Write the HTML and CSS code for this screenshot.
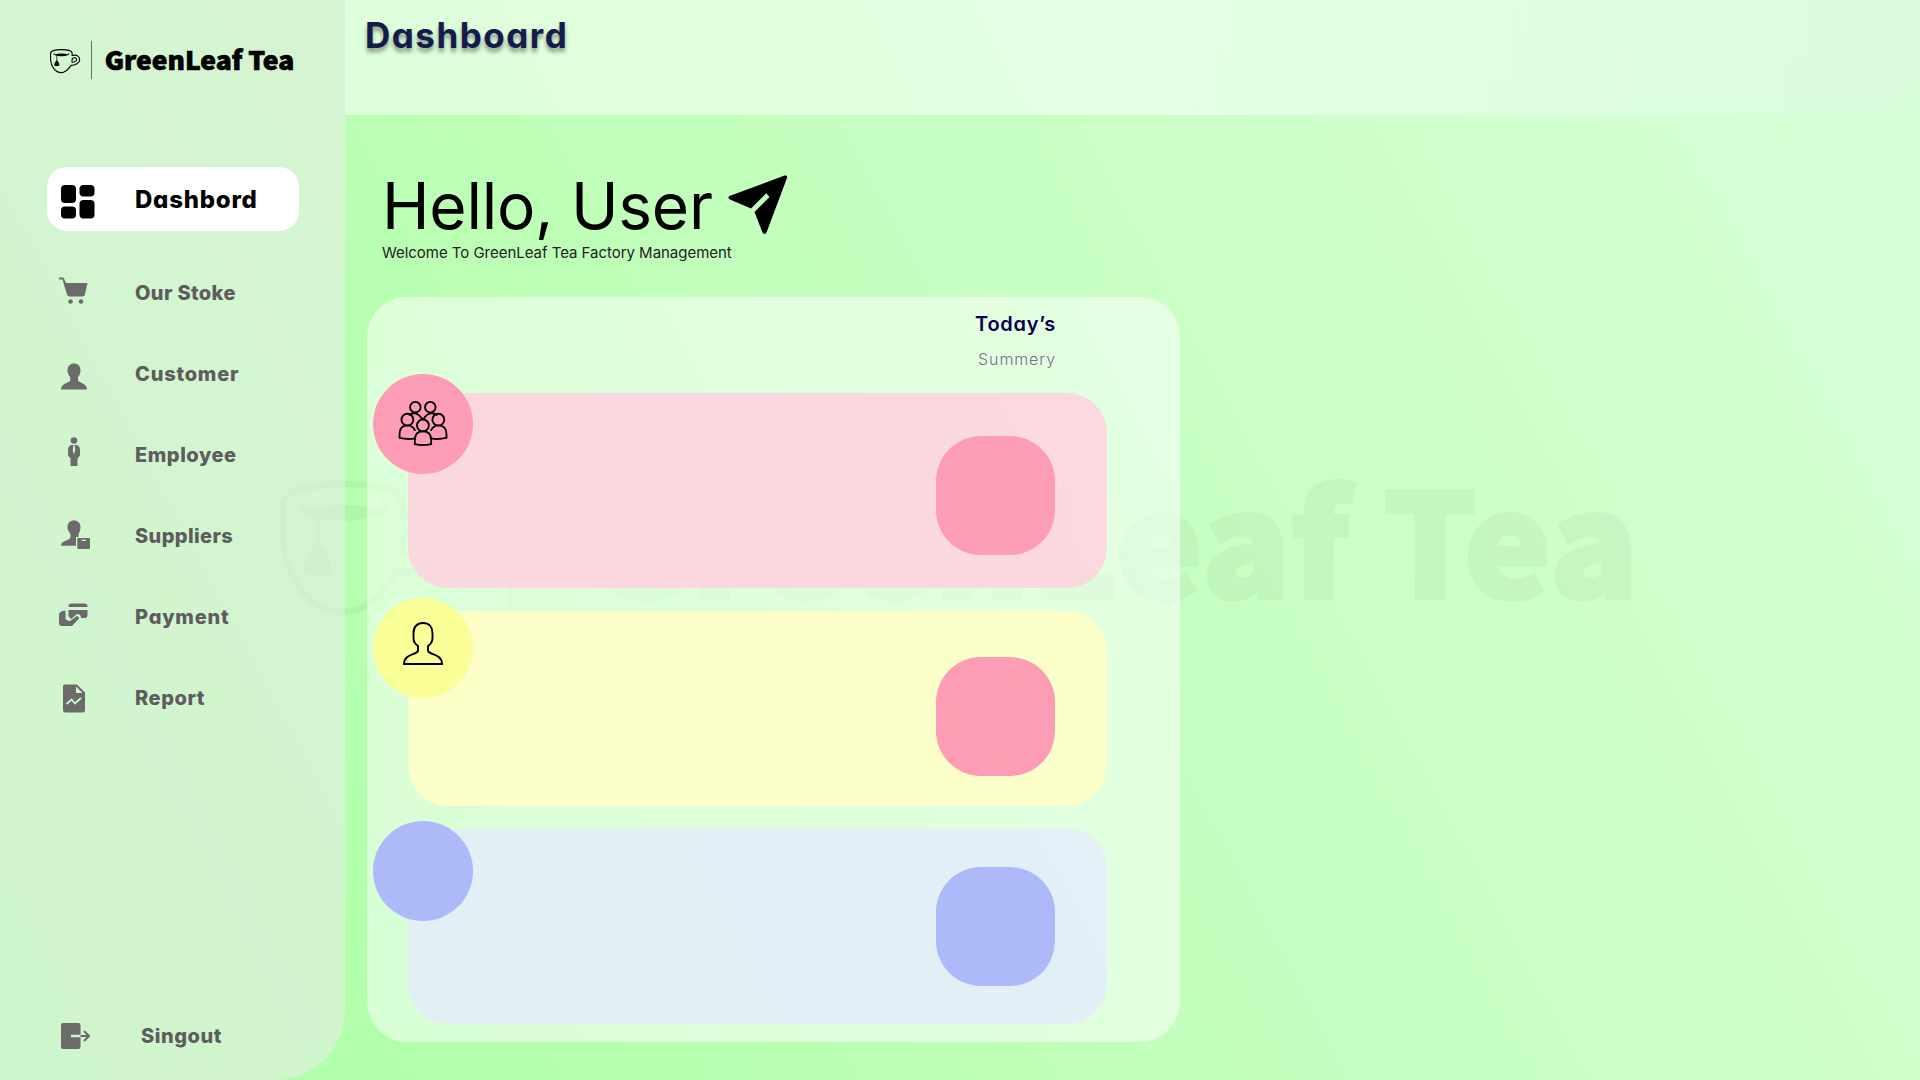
FILE: index.html
```html
<!DOCTYPE html>
<html lang="en">
<head>
<meta charset="utf-8">
<title>GreenLeaf Tea Dashboard</title>
<link rel="stylesheet" href="styles.css">
</head>
<body>
<svg class="watermark" viewBox="0 0 1360 220" aria-hidden="true">
  <g id="cup">
    <g fill="none" stroke="currentColor" stroke-width="6.500">
      <path d="M123 83V67C123 53 90 48 62 48S3 54 3 70V98C3 143 32 176 62 176C90 176 104 155 117 136C140 136 165 123 165 104C165 86 148 73 126 81"/>
      <path d="M124 97C136 90 148 93 148 103C148 113 135 120 122 117Z" stroke-width="6"/>
      <path d="M25 65Q17 72 25 78M102 65Q110 72 102 78M38 82V112" stroke-width="4"/>
    </g>
    <path fill="currentColor" d="M20 76Q62 62 107 76Q62 94 20 76ZM38 107Q51 118 51 128V135Q51 139 47 139H28Q24 139 24 135V128Q24 118 38 107Z"/>
    <rect x="229" y="0" width="3" height="212" fill="currentColor"/>
  </g>
  <text x="304" y="161.500" class="logo-word" textLength="1055" lengthAdjust="spacingAndGlyphs">GreenLeaf Tea</text>
</svg>

<div class="app">
  <aside class="sidebar">
    <svg class="logo" viewBox="0 0 1360 220" role="img" aria-label="GreenLeaf Tea">
      <use href="#cup"/>
      <text x="304" y="161.500" class="logo-word" textLength="1055" lengthAdjust="spacingAndGlyphs">GreenLeaf Tea</text>
    </svg>
    <nav class="nav">
      <a class="nav-item active">
        <svg class="icon" viewBox="0 0 40 40"><rect x="4" y="4" width="15" height="18" rx="4"/><rect x="22.500" y="4" width="15" height="11.500" rx="4"/><rect x="4" y="25.500" width="15" height="12" rx="4"/><rect x="22.500" y="19" width="15" height="18.500" rx="4"/></svg>
        <span class="label">Dashbord</span>
      </a>
      <a class="nav-item">
        <svg class="icon" viewBox="0 0 40 40"><path d="M2 4.500H6.500L9 10H30.500L28 21.500Q27.500 23.500 25.500 23.500H12.500Q10.500 23.500 10 21.500L5.500 6.500H2Z"/><circle cx="13.500" cy="28.500" r="2.300"/><circle cx="24" cy="28.500" r="2.300"/></svg>
        <span class="label snug">Our Stoke</span>
      </a>
      <a class="nav-item">
        <svg class="icon" viewBox="0 0 40 40"><path d="M17 9.500C21 9.500 23.500 12 23.500 16.500C23.500 20.500 21.500 22 21 23.500V26.500C22 29 30 29 30 35.500H4C4 29 12.500 29 13.300 26.500V23.500C12.800 22 10.500 20.500 10.500 16.500C10.500 12 13 9.500 17 9.500Z"/></svg>
        <span class="label wide">Customer</span>
      </a>
      <a class="nav-item">
        <svg class="icon" viewBox="0 0 40 40"><circle cx="17" cy="5.500" r="3.300"/><path fill-rule="evenodd" d="M15 10H19Q23 10 23 15.500V20.500L20.500 23.500V31H13.500V23.500L11 20.500V15.500Q11 10 15 10ZM16.200 10.500L15.800 16L17 19L18.200 16L17.800 10.500Z"/></svg>
        <span class="label">Employee</span>
      </a>
      <a class="nav-item">
        <svg class="icon" viewBox="0 0 40 40"><path d="M17 4.500C21 4.500 23.500 7 23.500 11.500C23.500 15 22 16.500 21.500 18.500V21H19V29.700H4C4 24 13 25 13.500 21V18.500C13 16.500 10.500 15 10.500 11.500C10.500 7 13 4.500 17 4.500Z"/><path fill-rule="evenodd" d="M21.300 22H32Q33 22 33 23V32Q33 33 32 33H21.300Q20.300 33 20.300 32V23Q20.300 22 21.300 22ZM24.500 23.800V25H29V23.800Z"/></svg>
        <span class="label snug">Suppliers</span>
      </a>
      <a class="nav-item">
        <svg class="icon" viewBox="0 0 40 40"><path transform="translate(0 2)" d="M11.500 8V7.500Q11.500 4.500 14.500 4.500H27.500Q30.500 4.500 30.500 7.500V8ZM11.500 11H30.500V16Q30.500 19 27.500 19H24Q24 15 20 15L14 20Q12.500 18 11.500 17ZM8.500 11.500V20Q10 22 13 22L19 17.500Q22 16.500 22 19.500L15.500 26.500Q15 27 14 27H5Q2 27 2 24V15.500Q2 12 8.500 11.500Z"/></svg>
        <span class="label wide">Payment</span>
      </a>
      <a class="nav-item">
        <svg class="icon" viewBox="0 0 40 40"><path fill-rule="evenodd" d="M8 6.500H20L28 14.500V32Q28 34.500 25.500 34.500H8.500Q6 34.500 6 32V8.500Q6 6.500 8 6.500ZM19 8.500V15H25.500Z"/><path d="M9.500 26L14.500 21.500L18 25.500L24 20" fill="none" stroke="#d0f7cf" stroke-width="1.800"/></svg>
        <span class="label">Report</span>
      </a>
    </nav>
    <a class="nav-item signout">
      <svg class="icon" viewBox="0 0 40 40"><path d="M6 4H21.500Q23.500 4 23.500 6V15.800H14V18.200H23.500V28Q23.500 30 21.500 30H6Q4 30 4 28V6Q4 4 6 4Z"/><path d="M23.500 17H32M27 12L32 17L27 22" fill="none" stroke="#6b6b6b" stroke-width="2"/></svg>
      <span class="label">Singout</span>
    </a>
  </aside>

  <main class="main">
    <header class="topbar"><h1 class="title">Dashboard</h1></header>
    <section class="greeting">
      <div class="hello">
        <h2 class="hello-text">Hello, User</h2>
        <svg class="plane" viewBox="0 0 60 60"><path fill-rule="evenodd" d="M1.500 21L56.500 .6Q59.800 0 59 3L38.500 57.500Q36.500 60.500 34.500 57.500L26.500 37L41.500 22L38.300 18.300L23 33.500L2 24.500Q-.8 23 1.500 21Z"/></svg>
      </div>
      <p class="welcome">Welcome To GreenLeaf Tea Factory Management</p>
    </section>
    <section class="panel">
      <div class="panel-head">
        <h3 class="today">Today’s</h3>
        <p class="summary">Summery</p>
      </div>
      <article class="card pink">
        <div class="badge">
          <svg class="people" viewBox="0 0 52 48"><g fill="none" stroke="#000" stroke-width="1.900"><circle cx="18" cy="6.500" r="5.500"/><circle cx="33.600" cy="6.500" r="5.500"/><path d="M11 15Q18 9 25.500 19M26.500 19Q33 9 41 15"/><circle cx="9.700" cy="19.500" r="6.200"/><circle cx="42" cy="19.500" r="6.200"/><path d="M18 39Q10 40.500 1.500 38.500V35Q1.500 25.500 9.700 25.500Q15 25.500 18 31M34 39Q42 40.500 50.500 38.500V35Q50.500 25.500 42 25.500Q37 25.500 34 31"/><circle cx="25.900" cy="25.500" r="6.200"/><path d="M17.500 45V40.500Q17.500 31.700 25.900 31.700Q34.500 31.700 34.500 40.500V45Q26 47 17.500 45Z"/></g></svg>
        </div>
        <div class="tile"></div>
      </article>
      <article class="card yellow">
        <div class="badge">
          <svg class="person" viewBox="0 0 40 43"><path fill="none" stroke="#000" stroke-width="1.900" d="M20 1C26 1 29.500 5 29.500 11V16Q29.500 21 25 24V29C27 33 39 32 39 42H1C1 32 13 33 15 29V24Q10.500 21 10.500 16V11C10.500 5 14 1 20 1Z"/></svg>
        </div>
        <div class="tile"></div>
      </article>
      <article class="card blue">
        <div class="badge"></div>
        <div class="tile"></div>
      </article>
    </section>
  </main>
</div>
</body>
</html>
```
FILE: styles.css
```css
* { box-sizing: border-box; margin: 0; padding: 0; }

body {
  width: 1920px;
  height: 1080px;
  overflow: hidden;
  position: relative;
  font-family: Inter, "Open Sans", sans-serif;
  background: linear-gradient(62deg, #acffa5 0%, #b8ffb1 32%, #c2ffbc 47%, #ceffca 74%, #daffd9 100%);
}

.logo-word {
  font-family: "Noto Sans CJK SC", "Noto Sans", sans-serif;
  font-weight: 900;
  font-size: 144px;
  fill: currentColor;
  stroke: currentColor;
  stroke-width: 4px;
}

.watermark {
  position: absolute;
  left: 280px;
  top: 436px;
  width: 1360px;
  height: 220px;
  color: #000;
  opacity: .032;
}

.app { position: relative; display: flex; height: 1080px; }

.sidebar {
  width: 345px;
  flex: none;
  display: flex;
  flex-direction: column;
  padding: 41px 46px 21px 47px;
  background: rgba(241, 236, 242, .5);
  border-bottom-right-radius: 70px;
}

.logo { width: 244.500px; height: 39.550px; margin-left: 3px; flex: none; }

.nav { display: flex; flex-direction: column; margin-top: 86.450px; }

.nav-item {
  display: flex;
  align-items: center;
  height: 40px;
  margin-bottom: 41px;
  padding-left: 10px;
  font-size: 20px;
  font-weight: 800;
  letter-spacing: .550px;
  color: #5d5d5d;
  font-feature-settings: "cv11";
}

.icon { width: 40px; height: 40px; fill: #6b6b6b; flex: none; }
.label { margin-left: 38px; white-space: nowrap; }
.snug { letter-spacing: .380px; }
.wide { letter-spacing: .800px; }

.active {
  height: 64px;
  margin-bottom: 42px;
  border-radius: 20px;
  background: #fff;
  color: #000;
  font-size: 24px;
  letter-spacing: .770px;
}
.active .icon { margin-top: 4px; fill: #000; }
.active .label { margin-top: 2px; }

.signout { margin: auto 0 0; }
.signout .label { margin: 0 0 7px 44px; }

.main { flex: 1; display: flex; flex-direction: column; }

.topbar {
  height: 115px;
  padding: 13px 20px;
  background: linear-gradient(90deg, rgba(255, 255, 255, .5) 50%, rgba(217, 250, 225, .5) 100%);
  border-bottom-right-radius: 50px;
}

.title {
  font-size: 35px;
  line-height: 44px;
  font-weight: 700;
  letter-spacing: 1.500px;
  color: #151b4b;
  text-shadow: 0 4px 4px rgba(0, 0, 0, .4);
  font-feature-settings: "cv11";
}

.greeting { height: 182px; padding: 52px 0 0 37px; }
.hello { display: flex; height: 78px; }
.hello-text {
  width: 346px;
  font-size: 64px;
  line-height: 78px;
  font-weight: 400;
  letter-spacing: -.250px;
  white-space: nowrap;
}
.plane { width: 60px; height: 60px; margin-top: 7.500px; }
.welcome { font-size: 15px; line-height: 18px; margin-top: -1px; letter-spacing: -.030px; color: #222; }

.panel {
  width: 813px;
  height: 745px;
  margin-left: 22px;
  padding: 15px 73px 18px 41px;
  border-radius: 40px;
  background: rgba(255, 255, 255, .5);
  display: flex;
  flex-direction: column;
  gap: 23px;
}

.panel-head {
  height: 58px;
  flex: none;
  padding-right: 51px;
  text-align: right;
  font-feature-settings: "cv11";
}
.today { font-size: 20px; line-height: 24px; font-weight: 600; letter-spacing: .700px; color: #08004f; }
.summary { font-size: 16px; line-height: 20px; margin-top: 13px; font-weight: 300; letter-spacing: .900px; color: #6f7090; }

.card {
  position: relative;
  height: 195px;
  flex: none;
  border-radius: 40px;
  display: flex;
  justify-content: flex-end;
  padding-right: 52px;
}
.tile { width: 119px; height: 119px; border-radius: 45px; }
.badge {
  position: absolute;
  left: -35px;
  top: -19px;
  width: 100px;
  height: 100px;
  border-radius: 50%;
}

.pink { background: rgba(253, 212, 222, .88); padding-top: 43px; }
.yellow { background: rgba(255, 255, 198, .9); padding-top: 46px; }
.blue { background: rgba(228, 234, 255, .75); padding-top: 38px; }
.pink .badge, .pink .tile, .yellow .tile { background: #fc9db5; }
.yellow .badge { background: #f9ff96; top: -13px; }
.blue .badge { background: #aeb9f9; top: -8px; }
.blue .tile { background: #aeb9f9; }

.people { display: block; width: 50px; height: 46px; margin: 27px 0 0 25px; }
.person { display: block; width: 40px; height: 43px; margin: 24px 0 0 30px; }
```
